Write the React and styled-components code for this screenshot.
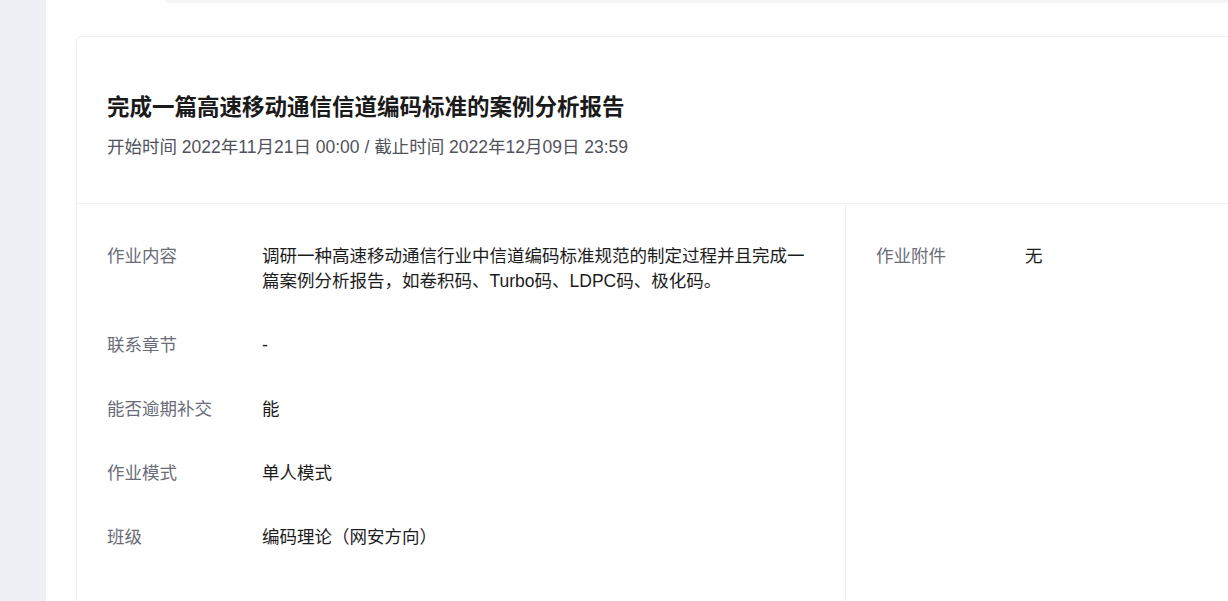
import React from "react";
import styled, { createGlobalStyle } from "styled-components";

const Global = createGlobalStyle`
  html, body { margin: 0; padding: 0; background: #fff; overflow: hidden; }
  body { font-family: "Liberation Sans", "Noto Sans CJK SC", sans-serif; }
`;

const Page = styled.div`
  display: flex;
  width: 1228px;
  height: 601px;
  overflow: hidden;
`;

const Sidebar = styled.aside`
  flex: 0 0 46px;
  background: #eef0f5;
`;

const Main = styled.main`
  flex: 1;
  display: flex;
  flex-direction: column;
  min-width: 0;
`;

const TopStrip = styled.div`
  flex: 0 0 3px;
  height: 3px;
  margin-left: 120px;
  background: #f5f5f6;
`;

const Content = styled.div`
  padding: 33px 0 0 30px;
`;

const Card = styled.section`
  width: 1200px;
  border: 1px solid #eceef4;
  border-radius: 6px;
  background: #fff;
`;

const Header = styled.header`
  padding: 56px 30px 43px;
  border-bottom: 1px solid #eeeff2;
`;

const Title = styled.h1`
  margin: 0;
  font-size: 22.5px;
  line-height: 30px;
  font-weight: 700;
  color: #1a1a1a;
`;

const Sub = styled.div`
  margin-top: 11px;
  font-size: 17.5px;
  line-height: 26px;
  color: #50525c;
`;

const Body = styled.div`
  display: grid;
  grid-template-columns: 768px 1fr;
  min-height: 420px;
`;

const Column = styled.div`
  padding: 40px 30px 0;
  border-left: ${p => (p.$right ? "1px solid #eeeff2" : "none")};
`;

const Row = styled.div`
  display: grid;
  grid-template-columns: ${p => p.$labelW}px 1fr;
  margin-bottom: 39px;
  font-size: 17.5px;
  line-height: 25px;
`;

const Label = styled.div`
  color: #6a6c78;
`;

const Value = styled.div`
  color: #1c1c1c;
  padding-right: 8px;
`;

const leftRows = [
  ["作业内容", "调研一种高速移动通信行业中信道编码标准规范的制定过程并且完成一篇案例分析报告，如卷积码、Turbo码、LDPC码、极化码。"],
  ["联系章节", "-"],
  ["能否逾期补交", "能"],
  ["作业模式", "单人模式"],
  ["班级", "编码理论（网安方向）"],
];

export default function App() {
  return (
    <>
      <Global />
      <Page>
        <Sidebar />
        <Main>
          <TopStrip />
          <Content>
            <Card>
              <Header>
                <Title>完成一篇高速移动通信信道编码标准的案例分析报告</Title>
                <Sub>开始时间 2022年11月21日 00:00 / 截止时间 2022年12月09日 23:59</Sub>
              </Header>
              <Body>
                <Column>
                  {leftRows.map(([l, v]) => (
                    <Row key={l} $labelW={155}>
                      <Label>{l}</Label>
                      <Value>{v}</Value>
                    </Row>
                  ))}
                </Column>
                <Column $right>
                  <Row $labelW={149}>
                    <Label>作业附件</Label>
                    <Value>无</Value>
                  </Row>
                </Column>
              </Body>
            </Card>
          </Content>
        </Main>
      </Page>
    </>
  );
}
